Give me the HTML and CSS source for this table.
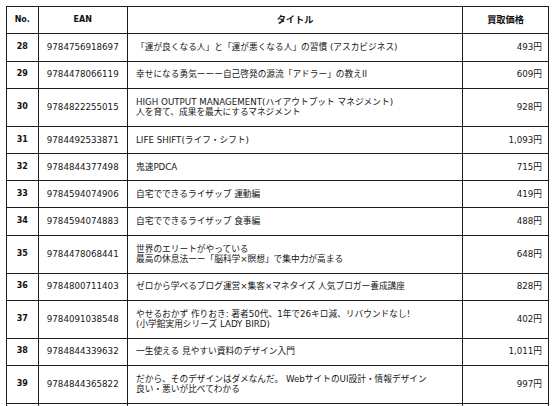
FILE: index.html
```html
<!DOCTYPE html>
<html lang="ja">
<head>
<meta charset="utf-8">
<title>買取価格一覧</title>
<link rel="stylesheet" href="styles.css">
</head>
<body>
<div class="sheet">
<table class="price-table">
  <colgroup>
    <col class="c-no">
    <col class="c-ean">
    <col class="c-title">
    <col class="c-price">
  </colgroup>
  <thead>
    <tr>
      <th class="h-latin">No.</th>
      <th class="h-latin">EAN</th>
      <th class="h-jp">タイトル</th>
      <th class="h-jp">買取価格</th>
    </tr>
  </thead>
  <tbody>
    <tr><td class="no">28</td><td class="ean">9784756918697</td><td class="title">「運が良くなる人」と「運が悪くなる人」の習慣 (アスカビジネス)</td><td class="price">493円</td></tr>
    <tr><td class="no">29</td><td class="ean">9784478066119</td><td class="title">幸せになる勇気ーーー自己啓発の源流「アドラー」の教えII</td><td class="price">609円</td></tr>
    <tr><td class="no">30</td><td class="ean">9784822255015</td><td class="title">HIGH OUTPUT MANAGEMENT(ハイアウトプット マネジメント)<br>人を育て、成果を最大にするマネジメント</td><td class="price">928円</td></tr>
    <tr><td class="no">31</td><td class="ean">9784492533871</td><td class="title">LIFE SHIFT(ライフ・シフト)</td><td class="price">1,093円</td></tr>
    <tr><td class="no">32</td><td class="ean">9784844377498</td><td class="title">鬼速PDCA</td><td class="price">715円</td></tr>
    <tr><td class="no">33</td><td class="ean">9784594074906</td><td class="title">自宅でできるライザップ 運動編</td><td class="price">419円</td></tr>
    <tr><td class="no">34</td><td class="ean">9784594074883</td><td class="title">自宅でできるライザップ 食事編</td><td class="price">488円</td></tr>
    <tr><td class="no">35</td><td class="ean">9784478068441</td><td class="title">世界のエリートがやっている<br>最高の休息法ーー「脳科学×瞑想」で集中力が高まる</td><td class="price">648円</td></tr>
    <tr><td class="no">36</td><td class="ean">9784800711403</td><td class="title">ゼロから学べるブログ運営×集客×マネタイズ 人気ブロガー養成講座</td><td class="price">828円</td></tr>
    <tr><td class="no">37</td><td class="ean">9784091038548</td><td class="title">やせるおかず 作りおき: 著者50代、1年で26キロ減、リバウンドなし!<br>(小学館実用シリーズ LADY BIRD)</td><td class="price">402円</td></tr>
    <tr><td class="no">38</td><td class="ean">9784844339632</td><td class="title">一生使える 見やすい資料のデザイン入門</td><td class="price">1,011円</td></tr>
    <tr><td class="no">39</td><td class="ean">9784844365822</td><td class="title">だから、そのデザインはダメなんだ。 WebサイトのUI設計・情報デザイン<br>良い・悪いが比べてわかる</td><td class="price">997円</td></tr>
    <tr class="next-row"><td class="no"></td><td class="ean"></td><td class="title"></td><td class="price"></td></tr>
  </tbody>
</table>
</div>
</body>
</html>
```

FILE: styles.css
```css
html, body {
  margin: 0;
  padding: 0;
  background: #ffffff;
}

.sheet {
  padding: 6px 0 0 6px;
}

.price-table {
  border-collapse: collapse;
  table-layout: fixed;
  width: 542px;
  font-family: "DejaVu Sans", "Noto Sans CJK JP", sans-serif;
  color: #161616;
}

.c-no { width: 31.5px; }
.c-ean { width: 89.5px; }
.c-title { width: 335px; }
.c-price { width: 86px; }

.price-table th,
.price-table td {
  border: 1px solid #1c1c1c;
  padding: 7.9px 6px;
  line-height: 10.5px;
  vertical-align: middle;
  white-space: nowrap;
  overflow: hidden;
}

.price-table th {
  font-weight: bold;
  text-align: center;
  color: #111;
}

.h-latin {
  font-size: 8px;
}

.h-jp {
  font-size: 9.2px;
}

.no {
  font-size: 8px;
  font-weight: bold;
  text-align: center;
  color: #111;
}

.ean {
  font-size: 8.7px;
  text-align: center;
}

.title {
  font-size: 8.7px;
  text-align: left;
  padding-left: 8px !important;
}

.price {
  font-size: 8.7px;
  text-align: right;
}

.next-row td {
  height: 12px;
}
```
